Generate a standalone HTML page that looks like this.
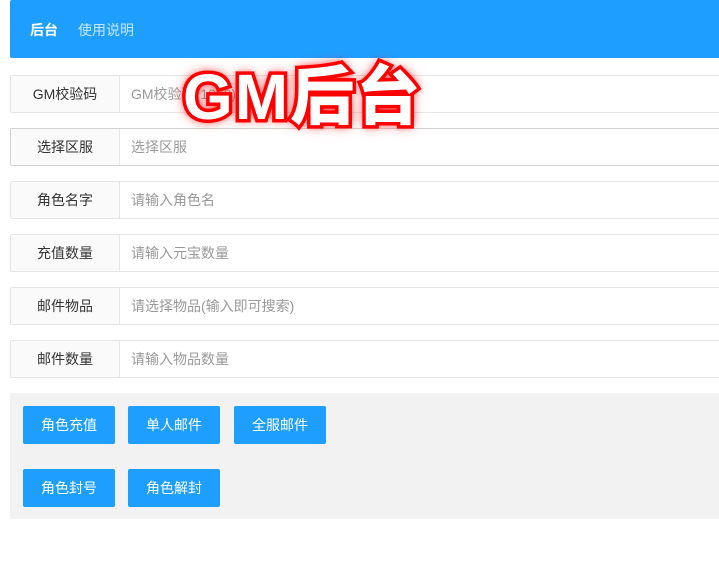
<!DOCTYPE html>
<html><head><meta charset="utf-8"><style>
*{margin:0;padding:0;box-sizing:border-box}
body{width:719px;height:587px;overflow:hidden;background:#fff;font-family:"Liberation Sans","Noto Sans CJK SC",sans-serif;font-size:14px;position:relative}
.hd{position:absolute;left:10px;top:0;width:720px;height:58px;background:#1e9fff;border-radius:2px}
.hd span{position:absolute;top:20px;font-size:14px;color:rgba(255,255,255,.75)}
.row{position:absolute;left:10px;width:720px;height:38px;border:1px solid #e6e6e6;border-radius:2px;background:#fff}
.row .l{position:absolute;left:0;top:0;width:109px;height:36px;background:#fafafa;border-right:1px solid #e6e6e6;text-align:center;line-height:36px;color:#333}
.row .i{position:absolute;left:120px;top:0;line-height:36px;color:#999}
.gray{position:absolute;left:10px;top:393px;width:710px;height:126px;background:#f2f2f2}
.b{position:absolute;width:92px;height:38px;background:#1e9fff;color:#fff;border-radius:2px;text-align:center;line-height:38px}
.big{position:absolute;left:183px;top:57px;font-size:64px;font-weight:900;color:#fff;-webkit-text-stroke:7px #f00;paint-order:stroke fill;text-shadow:0 0 8px #f00,0 0 14px rgba(255,0,0,.7);letter-spacing:2px;line-height:80px}
</style></head><body>
<div class="hd"><span style="left:20px;color:#fff;font-weight:bold">后台</span><span style="left:68px">使用说明</span></div>
<div class="row" style="top:75px"><div class="l">GM校验码</div><div class="i">GM校验码(1000)</div></div>
<div class="row" style="top:128px;border-color:#d2d2d2"><div class="l">选择区服</div><div class="i">选择区服</div></div>
<div class="row" style="top:181px"><div class="l">角色名字</div><div class="i">请输入角色名</div></div>
<div class="row" style="top:234px"><div class="l">充值数量</div><div class="i">请输入元宝数量</div></div>
<div class="row" style="top:287px"><div class="l">邮件物品</div><div class="i">请选择物品(输入即可搜索)</div></div>
<div class="row" style="top:340px"><div class="l">邮件数量</div><div class="i">请输入物品数量</div></div>
<div class="gray"></div>
<div class="b" style="left:23px;top:406px">角色充值</div>
<div class="b" style="left:128px;top:406px">单人邮件</div>
<div class="b" style="left:234px;top:406px">全服邮件</div>
<div class="b" style="left:23px;top:469px">角色封号</div>
<div class="b" style="left:128px;top:469px">角色解封</div>
<div class="big">GM后台</div>
</body></html>
